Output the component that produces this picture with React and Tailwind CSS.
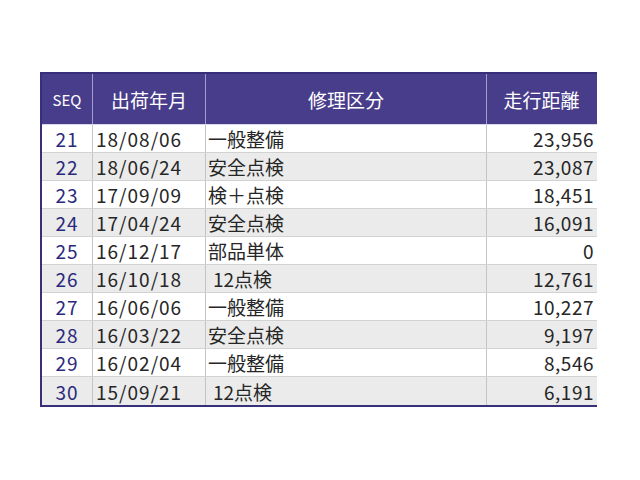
import React from 'react';

const rows = [
  { seq: 21, date: '18/08/06', kind: '一般整備', km: '23,956' },
  { seq: 22, date: '18/06/24', kind: '安全点検', km: '23,087' },
  { seq: 23, date: '17/09/09', kind: '検＋点検', km: '18,451' },
  { seq: 24, date: '17/04/24', kind: '安全点検', km: '16,091' },
  { seq: 25, date: '16/12/17', kind: '部品単体', km: '0' },
  { seq: 26, date: '16/10/18', kind: '12点検', km: '12,761', indent: true },
  { seq: 27, date: '16/06/06', kind: '一般整備', km: '10,227' },
  { seq: 28, date: '16/03/22', kind: '安全点検', km: '9,197' },
  { seq: 29, date: '16/02/04', kind: '一般整備', km: '8,546' },
  { seq: 30, date: '15/09/21', kind: '12点検', km: '6,191', indent: true },
];

const font = { fontFamily: '"Noto Sans CJK JP", "Noto Sans", sans-serif' };

export default function App() {
  return (
    <div className="w-[640px] h-[480px] bg-white pt-[72px] pl-[40px]" style={font}>
      <div className="w-[557px] overflow-hidden">
        <div className="w-[560px] border-2 border-[#372f7a] bg-white">
          {/* header */}
          <div className="grid grid-cols-[51px_113px_281px_111px] h-[51px] bg-[#483d8b] text-white border-b border-[#d8d6ea]">
            <div className="flex items-center justify-center border-r border-[#a29cd0] text-[15px] leading-none">SEQ</div>
            <div className="flex items-center justify-center border-r border-[#a29cd0] text-[19px] leading-none">出荷年月</div>
            <div className="flex items-center justify-center border-r border-[#a29cd0] text-[19px] leading-none">修理区分</div>
            <div className="flex items-center justify-center text-[19px] leading-none pr-[2px]">走行距離</div>
          </div>
          {/* body */}
          {rows.map((r, i) => (
            <div
              key={r.seq}
              className={`grid grid-cols-[51px_113px_281px_111px] h-[28px] text-[19px] leading-none text-[#262626] ${
                i % 2 === 1 ? 'bg-[#ebebeb]' : 'bg-white'
              } ${i < rows.length - 1 ? 'border-b border-[#d2d2d2]' : ''}`}
            >
              <div className="flex items-center justify-center border-r border-[#c4c4c4] text-[#2a2a7c] tracking-[1px]">{r.seq}</div>
              <div className="flex items-center pl-[3px] border-r border-[#c4c4c4] tracking-[1px]">{r.date}</div>
              <div className={`flex items-center border-r border-[#c4c4c4] ${r.indent ? 'pl-[7px]' : 'pl-[2px]'}`}>
                {r.kind}
              </div>
              <div className="flex items-center justify-end pr-[4px] tracking-[0.5px]">{r.km}</div>
            </div>
          ))}
        </div>
      </div>
    </div>
  );
}
